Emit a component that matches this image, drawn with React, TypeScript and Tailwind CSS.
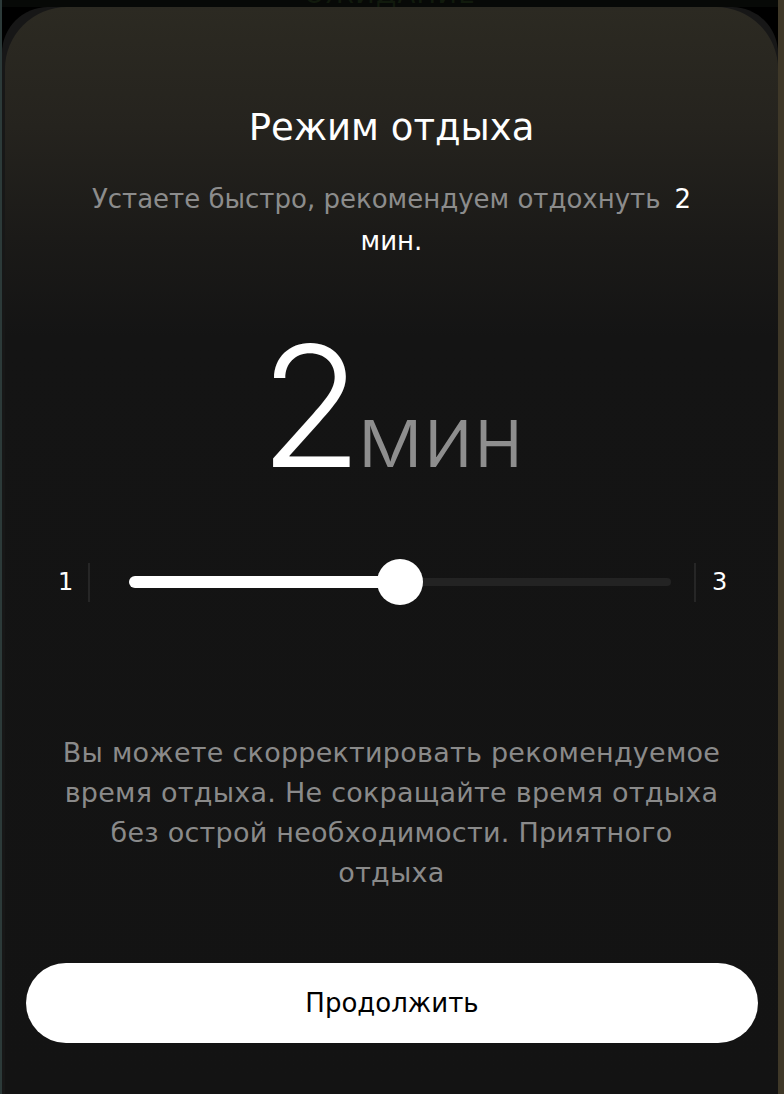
const sans = { fontFamily: '"DejaVu Sans", "Liberation Sans", sans-serif' };

function RestSlider({ value, min, max }: { value: number; min: number; max: number }) {
  const pct = ((value - min) / (max - min)) * 100;
  return (
    <div className="relative flex-1 h-[12px] flex items-center">
      <div className="absolute inset-x-0 h-[8px] rounded-full bg-[#232323]" />
      <div className="absolute left-0 h-[12px] rounded-full bg-white" style={{ width: `${pct}%` }} />
      <div
        className="absolute w-[46px] h-[46px] rounded-full bg-white -translate-x-1/2"
        style={{ left: `${pct}%` }}
      />
    </div>
  );
}

export default function App() {
  const minutes = 2;

  return (
    <div className="w-full h-[1094px] bg-black flex overflow-hidden" style={sans}>
      <div className="w-[2px] bg-[#2c3a39]" />
      <div className="flex-1 flex flex-col">
        {/* screen behind the sheet */}
        <div className="h-[7px] overflow-hidden flex justify-center bg-[#070907]">
          <span className="text-[26px] leading-none -mt-[19px] text-[#111a0d] tracking-wider">ОЖИДАНИЕ</span>
        </div>

        <div className="flex-1 rounded-t-[46px] bg-[#171717] flex flex-col">
          <div className="flex-1 flex flex-col rounded-t-[62px] ml-[3px] bg-[linear-gradient(180deg,#2c2a22_0px,#25231e_120px,#1b1a18_230px,#141414_330px,#131313_100%)]">
            <h1 className="mt-[97px] text-center text-white text-[37px] leading-[48px]">Режим отдыха</h1>

            <p className="mt-[26px] text-center text-[#8c8c8c] text-[26px] leading-[42px]">
              Устаете быстро, рекомендуем отдохнуть
              <span className="ml-[14px] text-white">{minutes}</span>
              <br />
              <span className="text-white">мин.</span>
            </p>

            <div
              className="mt-[69px] flex items-baseline justify-center"
              style={{ fontFamily: 'Inter, "Noto Sans", sans-serif' }}
            >
              <span className="text-white text-[168px] leading-[150px] font-light">{minutes}</span>
              <span className="-ml-[5px] text-[#8e8e8e] text-[86px] leading-none font-light">мин</span>
            </div>

            <div className="mt-[78px] flex items-center pl-[53px] pr-[53px] h-[46px]">
              <span className="w-[12px] text-center text-white text-[24px]">1</span>
              <div className="ml-[18px] w-[2px] h-[39px] bg-[#262626]" />
              <div className="ml-[39px] flex-1 flex">
                <RestSlider value={minutes} min={1} max={3} />
              </div>
              <div className="ml-[23px] w-[2px] h-[39px] bg-[#262626]" />
              <span className="ml-[16px] w-[13px] text-center text-white text-[24px]">3</span>
            </div>

            <p className="mt-[128px] text-center text-[#8a8a8a] text-[27px] leading-[40px] tracking-[0.25px]">
              Вы можете скорректировать рекомендуемое
              <br />
              время отдыха. Не сокращайте время отдыха
              <br />
              без острой необходимости. Приятного
              <br />
              отдыха
            </p>

            <button className="mt-[70px] ml-[21px] mr-[20px] h-[80px] shrink-0 rounded-full bg-white text-black text-[26px]">
              Продолжить
            </button>
          </div>
        </div>
      </div>
      <div className="w-[6px] bg-[#3f3828]" />
    </div>
  );
}
